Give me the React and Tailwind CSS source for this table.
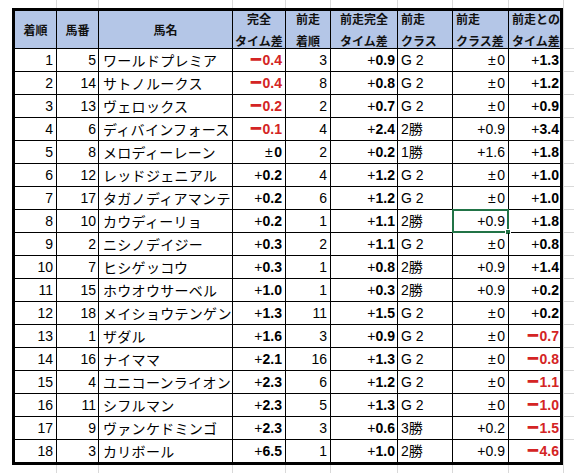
import React from 'react';

const rows = [
  [1, 5, 'ワールドプレミア', '-0.4', 3, '+0.9', 'G 2', '±0', '+1.3'],
  [2, 14, 'サトノルークス', '-0.4', 8, '+0.8', 'G 2', '±0', '+1.2'],
  [3, 13, 'ヴェロックス', '-0.2', 2, '+0.7', 'G 2', '±0', '+0.9'],
  [4, 6, 'ディバインフォース', '-0.1', 4, '+2.4', '2勝', '+0.9', '+3.4'],
  [5, 8, 'メロディーレーン', '±0', 2, '+0.2', '1勝', '+1.6', '+1.8'],
  [6, 12, 'レッドジェニアル', '+0.2', 4, '+1.2', 'G 2', '±0', '+1.0'],
  [7, 17, 'タガノディアマンテ', '+0.2', 6, '+1.2', 'G 2', '±0', '+1.0'],
  [8, 10, 'カウディーリョ', '+0.2', 1, '+1.1', '2勝', '+0.9', '+1.8'],
  [9, 2, 'ニシノデイジー', '+0.3', 2, '+1.1', 'G 2', '±0', '+0.8'],
  [10, 7, 'ヒシゲッコウ', '+0.3', 1, '+0.8', '2勝', '+0.9', '+1.4'],
  [11, 15, 'ホウオウサーベル', '+1.0', 1, '+0.3', '2勝', '+0.9', '+0.2'],
  [12, 18, 'メイショウテンゲン', '+1.3', 11, '+1.5', 'G 2', '±0', '+0.2'],
  [13, 1, 'ザダル', '+1.6', 3, '+0.9', 'G 2', '±0', '-0.7'],
  [14, 16, 'ナイママ', '+2.1', 16, '+1.3', 'G 2', '±0', '-0.8'],
  [15, 4, 'ユニコーンライオン', '+2.3', 6, '+1.2', 'G 2', '±0', '-1.1'],
  [16, 11, 'シフルマン', '+2.3', 5, '+1.3', 'G 2', '±0', '-1.0'],
  [17, 9, 'ヴァンケドミンゴ', '+2.3', 3, '+0.6', '3勝', '+0.2', '-1.5'],
  [18, 3, 'カリボール', '+6.5', 1, '+1.0', '2勝', '+0.9', '-4.6'],
];

const headers = [
  { lines: ['着順'], left: false },
  { lines: ['馬番'], left: false },
  { lines: ['馬名'], left: false },
  { lines: ['完全', 'タイム差'], left: false },
  { lines: ['前走', '着順'], left: false },
  { lines: ['前走完全', 'タイム差'], left: false },
  { lines: ['前走', 'クラス'], left: true },
  { lines: ['前走', 'クラス差'], left: true },
  { lines: ['前走との', 'タイム差'], left: true },
];

const gridX = [56, 98, 232, 285, 330, 397, 452, 508, 563];

function Sign({ children }) {
  if (children === '±') return <span className="mr-[1.5px]">±</span>;
  return <span>{children}</span>;
}

function TimeDiff({ value }) {
  const sign = value[0];
  const num = value.slice(1);
  if (sign === '-') {
    return (
      <span className="font-bold text-[#d42424]">
        <span className="mr-[1.5px] font-['DejaVu_Sans_Mono',monospace] text-[17px] leading-none">━</span>
        {num}
      </span>
    );
  }
  return (
    <span>
      <Sign>{sign}</Sign>
      <span className="font-bold">{num}</span>
    </span>
  );
}

function ClassDiff({ value }) {
  return (
    <span>
      <Sign>{value[0]}</Sign>
      {value.slice(1)}
    </span>
  );
}

function BackgroundGrid() {
  return (
    <svg className="absolute inset-0" width="574" height="473">
      {gridX.map((x) => (
        <line key={x} x1={x + 0.5} y1="0" x2={x + 0.5} y2="473" stroke="#d9d9d9" />
      ))}
      {rows.map((_, i) => (
        <line key={i} x1="563" y1={48.5 + 23 * i} x2="574" y2={48.5 + 23 * i} stroke="#d9d9d9" />
      ))}
    </svg>
  );
}

export default function App() {
  return (
    <div className="relative w-[574px] h-[473px] overflow-hidden bg-white font-['Liberation_Sans','Noto_Sans_CJK_JP',sans-serif] text-black">
      <BackgroundGrid />
      <div className="relative ml-[12px] mt-[8px] w-fit border-[3px] border-black bg-white">
        <div className="grid grid-cols-[42px_42px_134px_53px_45px_67px_55px_56px_51px]">
          {headers.map((h, i) => (
            <div
              key={i}
              className={`flex h-[38px] flex-col justify-center border-b border-black bg-[#b4c6e7] font-['Noto_Sans_CJK_JP',sans-serif] text-[12px] font-bold leading-[22px] text-[#111] ${
                i < 8 ? 'border-r' : ''
              } ${h.left ? 'items-start pl-[3px]' : 'items-center'}`}
            >
              {h.lines.map((l) => (
                <span key={l} className="whitespace-nowrap">{l}</span>
              ))}
            </div>
          ))}

          {rows.map((r, ri) => {
            const last = ri === rows.length - 1;
            const cell = `flex items-center whitespace-nowrap border-black text-[14px] ${
              last ? 'h-[22px]' : 'h-[23px] border-b'
            }`;
            return (
              <React.Fragment key={ri}>
                <div className={`${cell} justify-end border-r pr-[3px]`}>{r[0]}</div>
                <div className={`${cell} justify-end border-r pr-[2px]`}>{r[1]}</div>
                <div className={`${cell} border-r pl-[4px] font-['Noto_Sans_CJK_JP',sans-serif] text-[13px] tracking-[0.3px]`}>
                  {r[2]}
                </div>
                <div className={`${cell} justify-end border-r pr-[3px]`}>
                  <TimeDiff value={r[3]} />
                </div>
                <div className={`${cell} justify-end border-r pr-[3px]`}>{r[4]}</div>
                <div className={`${cell} justify-end border-r pr-[2px]`}>
                  <TimeDiff value={r[5]} />
                </div>
                <div className={`${cell} border-r pl-[3px]`}>{r[6]}</div>
                <div className={`${cell} relative justify-end border-r pr-[3px]`}>
                  <ClassDiff value={r[7]} />
                  {ri === 7 && (
                    <>
                      <div className="absolute -top-px -left-px -right-px -bottom-px border-2 border-[#217346]" />
                      <div className="absolute -right-[3px] -bottom-[3px] h-[6px] w-[6px] border border-white bg-[#217346]" />
                    </>
                  )}
                </div>
                <div className={`${cell} justify-end pr-[1px]`}>
                  <TimeDiff value={r[8]} />
                </div>
              </React.Fragment>
            );
          })}
        </div>
      </div>
    </div>
  );
}
